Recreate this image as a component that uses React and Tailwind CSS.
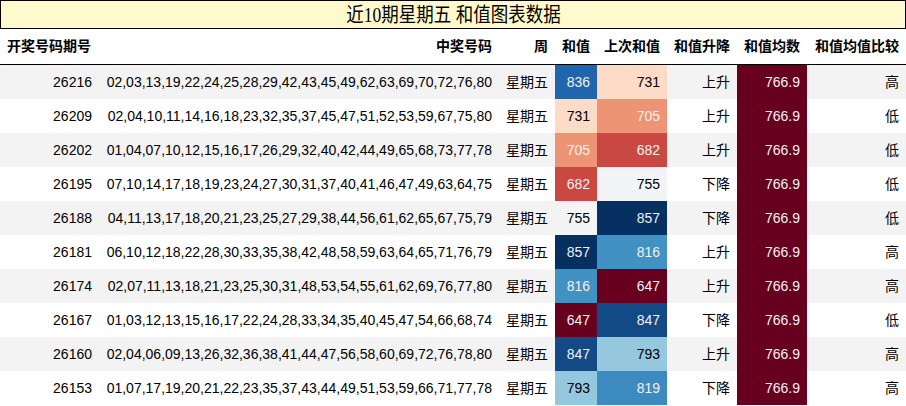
const rows = [
  ["26216", "02,03,13,19,22,24,25,28,29,42,43,45,49,62,63,69,70,72,76,80", 836, 731, "上升", "高"],
  ["26209", "02,04,10,11,14,16,18,23,32,35,37,45,47,51,52,53,59,67,75,80", 731, 705, "上升", "低"],
  ["26202", "01,04,07,10,12,15,16,17,26,29,32,40,42,44,49,65,68,73,77,78", 705, 682, "上升", "低"],
  ["26195", "07,10,14,17,18,19,23,24,27,30,31,37,40,41,46,47,49,63,64,75", 682, 755, "下降", "低"],
  ["26188", "04,11,13,17,18,20,21,23,25,27,29,38,44,56,61,62,65,67,75,79", 755, 857, "下降", "低"],
  ["26181", "06,10,12,18,22,28,30,33,35,38,42,48,58,59,63,64,65,71,76,79", 857, 816, "上升", "高"],
  ["26174", "02,07,11,13,18,21,23,25,30,31,48,53,54,55,61,62,69,76,77,80", 816, 647, "上升", "高"],
  ["26167", "01,03,12,13,15,16,17,22,24,28,33,34,35,40,45,47,54,66,68,74", 647, 847, "下降", "低"],
  ["26160", "02,04,06,09,13,26,32,36,38,41,44,47,56,58,60,69,72,76,78,80", 847, 793, "上升", "高"],
  ["26153", "01,07,17,19,20,21,22,23,35,37,43,44,49,51,53,59,66,71,77,78", 793, 819, "下降", "高"],
];

const heat = {
  647: "bg-[#67001f] text-[#f1f1f1]",
  682: "bg-[#ca4842] text-[#f1f1f1]",
  705: "bg-[#ed9475] text-[#f1f1f1]",
  731: "bg-[#fddbc7] text-black",
  755: "bg-[#f2f4f6] text-black",
  793: "bg-[#95c7df] text-black",
  816: "bg-[#4191c2] text-[#f1f1f1]",
  819: "bg-[#3d8abf] text-[#f1f1f1]",
  836: "bg-[#2166ac] text-[#f1f1f1]",
  847: "bg-[#124a85] text-[#f1f1f1]",
  857: "bg-[#053061] text-[#f1f1f1]",
};

const grid = "grid grid-cols-[99px_400px_56px_42px_70px_70px_70px_99px]";

export default function App() {
  return (
    <div
      className="w-[906px] h-[406px] bg-white text-black overflow-hidden"
      style={{ fontFamily: '"Liberation Sans", "Noto Sans CJK SC", sans-serif' }}
    >
      <div className="h-[29px] border border-black bg-[#fffacd] flex items-center justify-center">
        <span
          className="inline-block text-[20px] leading-none scale-x-[0.875]"
          style={{ fontFamily: '"Liberation Serif", "Noto Sans CJK SC", serif' }}
        >
          近10期星期五 和值图表数据
        </span>
      </div>
      <div className={`${grid} h-[36px] border-b border-black items-center text-[14px] font-bold`}>
        <div className="px-[7px] text-left whitespace-nowrap">开奖号码期号</div>
        <div className="px-[7px] text-right">中奖号码</div>
        <div className="px-[7px] text-right">周</div>
        <div className="px-[7px] text-right">和值</div>
        <div className="px-[7px] text-right">上次和值</div>
        <div className="px-[7px] text-right">和值升降</div>
        <div className="px-[7px] text-right">和值均数</div>
        <div className="px-[7px] text-right whitespace-nowrap">和值均值比较</div>
      </div>
      {rows.map((r, i) => (
        <div
          key={r[0]}
          className={`${grid} h-[34px] text-[14px] ${i % 2 === 0 ? "bg-[#f3f3f3]" : "bg-white"}`}
        >
          <div className="px-[7px] flex items-center justify-end">{r[0]}</div>
          <div className="px-[7px] flex items-center justify-end whitespace-nowrap">{r[1]}</div>
          <div className="px-[7px] flex items-center justify-end">星期五</div>
          <div className={`px-[7px] flex items-center justify-end ${heat[r[2]]}`}>{r[2]}</div>
          <div className={`px-[7px] flex items-center justify-end ${heat[r[3]]}`}>{r[3]}</div>
          <div className="px-[7px] flex items-center justify-end">{r[4]}</div>
          <div className="px-[7px] flex items-center justify-end bg-[#67001f] text-[#f1f1f1]">766.9</div>
          <div className="px-[7px] flex items-center justify-end">{r[5]}</div>
        </div>
      ))}
    </div>
  );
}
